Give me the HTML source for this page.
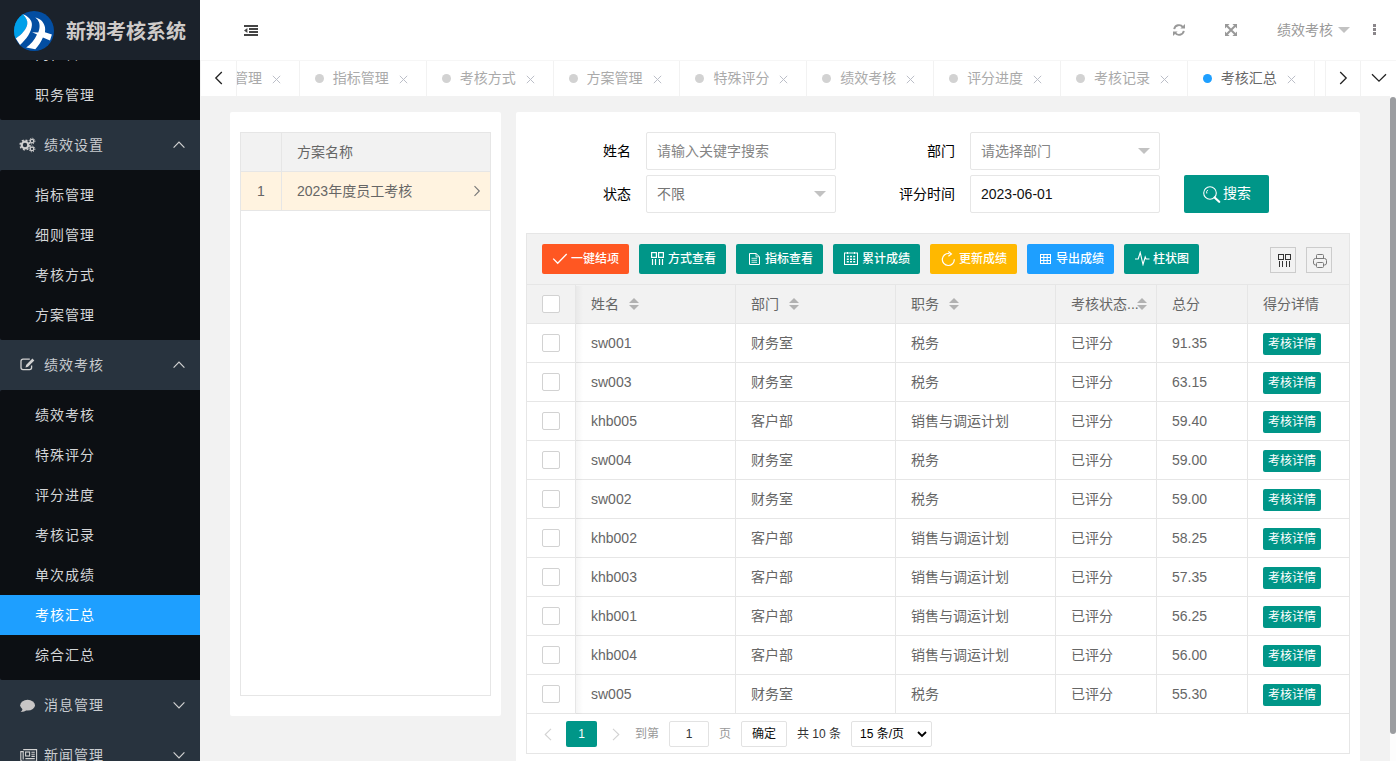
<!DOCTYPE html>
<html lang="zh-CN">
<head>
<meta charset="utf-8">
<title>新翔考核系统</title>
<style>
*{box-sizing:border-box;margin:0;padding:0}
html,body{width:1396px;height:761px;overflow:hidden}
body{font-family:"Liberation Sans","Noto Sans CJK SC",sans-serif;font-size:14px;color:#666;background:#f2f2f2;position:relative;line-height:1}
ul{list-style:none}
svg{display:block}
/* sidebar */
#side{position:absolute;left:0;top:0;width:200px;height:761px;background:#28333e;overflow:hidden}
#logo{position:absolute;left:0;top:0;width:200px;height:60px;background:#1b222b;z-index:5}
#logo .ttl{position:absolute;left:66px;top:0;line-height:64px;font-size:20px;font-weight:bold;color:#cfcbc9;white-space:nowrap;letter-spacing:0}
#logo svg{position:absolute;left:14px;top:11px}
#menu{position:absolute;left:0;top:-10px;width:200px}
#menu .par{height:50px;line-height:50px;color:#c9ccd0;position:relative;padding-left:44px;font-size:14px;letter-spacing:1px}
#menu .par .ic{position:absolute;left:19.500px;top:17px}
#menu .par .ar{position:absolute;left:172px;top:20px}
#menu .sub{background:#0c0f13;padding:5px 0;border-radius:2px 0 0 2px}
#menu .sub li{height:40px;line-height:40px;padding-left:35px;color:#d4d6d8;font-size:14px;letter-spacing:1px}
#menu .sub li.on{background:#1e9fff;color:#fff}
/* header */
#hdr{position:absolute;left:200px;top:0;width:1196px;height:60px;background:#fff}
#tabs{position:absolute;left:200px;top:60px;width:1196px;height:36px;background:#fff;border-top:1px solid #f6f6f6;border-left:1px solid #f4f4f4;overflow:hidden}
#tabs .tab{position:absolute;top:0;height:35px;width:126.86px;border-right:1px solid #f2f2f2;line-height:34px;color:#aaa;font-size:14px;white-space:nowrap}
#tabs .tab i{position:absolute;left:15px;top:13px;width:9px;height:9px;border-radius:50%;background:#d2d2d2}
#tabs .tab span{position:absolute;left:33px;top:0}
#tabs .tab b{position:absolute;left:99px;top:14px;font-weight:normal}
#tabs .tab.on{color:#666}
#tabs .tab.on i{background:#1e9fff}
#tabs .ctl{position:absolute;top:0;height:35px;background:#fff;border-left:1px solid #f2f2f2}
/* cards */
.card{position:absolute;background:#fff;border-radius:2px}
table{border-collapse:separate;border-spacing:0}

/* left card */
.tv{position:absolute;border:1px solid #e6e6e6;background:#fff}
.lt td,.lt th{height:39px;border-right:1px solid #e6e6e6;border-bottom:1px solid #e6e6e6;font-weight:normal;text-align:left;padding:0 15px;font-size:14px;color:#666;white-space:nowrap}
.lt th{background:#f2f2f2}
.lt tr.sel td{background:#fff3e0}
/* form */
.lab{position:absolute;width:110px;text-align:right;line-height:38px;height:38px;color:#000;font-size:14px}
.inp{position:absolute;width:190px;height:38px;border:1px solid #e6e6e6;border-radius:2px;background:#fff;line-height:36px;padding-left:10px;font-size:14px;color:#757575;white-space:nowrap}
.edge{position:absolute;right:9px;top:15px;width:0;height:0;border:6px solid transparent;border-top-color:#c2c2c2;border-bottom-width:0}
.btn{position:absolute;background:#009688;color:#fff;border-radius:2px;white-space:nowrap}
.tb .btn{top:10px;height:30px;line-height:31px;font-size:12px;width:87px;font-weight:500}
.tb .btn svg{position:absolute}
.tb .btn span{position:absolute;top:0}
/* data table */
.dt{position:absolute;left:0;top:51px;width:822px;table-layout:fixed}
.dt th,.dt td{height:39px;border-right:1px solid #e6e6e6;border-bottom:1px solid #e6e6e6;font-weight:normal;text-align:left;padding:0 15px;font-size:14px;color:#666;white-space:nowrap;overflow:hidden;position:relative}
.dt th{background:#f2f2f2}
.dt td:last-child,.dt th:last-child{border-right:0}
.cb{display:block;width:18px;height:18px;border:1px solid #d2d2d2;border-radius:2px;background:#fff;margin:0 auto}
.xs{display:inline-block;vertical-align:middle;height:22px;line-height:22px;padding:0 5px;font-size:12px;background:#009688;color:#fff;border-radius:2px;position:relative;top:1px}
.sort{position:absolute;top:13px;width:10px;height:12px}
.sort:before,.sort:after{content:"";position:absolute;left:0;width:0;height:0;border:5px solid transparent}
.sort:before{top:-5px;border-bottom-color:#b2b2b2}
.sort:after{top:7px;border-top-color:#b2b2b2}
.pg{position:absolute;left:0;top:480px;width:822px;height:39px;font-size:12px;color:#333}
.pg>*{position:absolute}
</style>
</head>
<body>
<div id="side">
  <div id="menu">
    <ul class="sub">
      <li>部门管理</li>
      <li style="position:relative;top:-1px">岗位管理</li>
      <li>职务管理</li>
    </ul>
    <div class="par"><span class="ic"><svg style="margin-left:-1px" width="18" height="16" viewBox="0 0 18 16"><g fill="none" stroke="#cfcfcf"><circle cx="6" cy="8" r="3.300" stroke-width="2.200"/><circle cx="6" cy="8" r="4.900" stroke-width="1.500" stroke-dasharray="1.960 1.890"/><circle cx="13" cy="4.100" r="1.800" stroke-width="1.300"/><circle cx="13" cy="4.100" r="2.900" stroke-width="1" stroke-dasharray="1.150 1.130"/><circle cx="13" cy="11.900" r="1.800" stroke-width="1.300"/><circle cx="13" cy="11.900" r="2.900" stroke-width="1" stroke-dasharray="1.150 1.130"/></g></svg></span>绩效设置<span class="ar"><svg width="14" height="10" viewBox="0 0 14 10"><path d="M1.6 7.6L7 2.2l5.4 5.4" fill="none" stroke="#d2d2d2" stroke-width="1.2"/></svg></span></div>
    <ul class="sub">
      <li>指标管理</li>
      <li>细则管理</li>
      <li>考核方式</li>
      <li>方案管理</li>
    </ul>
    <div class="par"><span class="ic"><svg width="18" height="16" viewBox="0 0 18 16"><path d="M9.800 2.200H3a2 2 0 0 0-2 2v6.400a2 2 0 0 0 2 2h6.600a2 2 0 0 0 2-2V8.600" fill="none" stroke="#d2d2d2" stroke-width="1.300"/><path d="M5.500 10.400l.6-2.500 6.300-6.300 1.900 1.900-6.300 6.300z" fill="#d2d2d2"/></svg></span>绩效考核<span class="ar"><svg width="14" height="10" viewBox="0 0 14 10"><path d="M1.6 7.6L7 2.2l5.4 5.4" fill="none" stroke="#d2d2d2" stroke-width="1.2"/></svg></span></div>
    <ul class="sub">
      <li>绩效考核</li>
      <li>特殊评分</li>
      <li>评分进度</li>
      <li>考核记录</li>
      <li>单次成绩</li>
      <li class="on">考核汇总</li>
      <li>综合汇总</li>
    </ul>
    <div class="par"><span class="ic"><svg width="18" height="16" viewBox="0 0 18 16"><ellipse cx="7.600" cy="8.200" rx="7.400" ry="5.400" fill="#c8c6c6"/><path d="M2.600 11 C2.600 13 1.800 14.200 .6 15 C3.200 15 5.400 14.200 6.600 13z" fill="#c8c6c6"/></svg></span>消息管理<span class="ar"><svg width="14" height="10" viewBox="0 0 14 10"><path d="M1.6 2.4L7 7.8l5.4-5.4" fill="none" stroke="#d2d2d2" stroke-width="1.2"/></svg></span></div>
    <div class="par"><span class="ic"><svg width="18" height="16" viewBox="0 0 18 16"><g fill="none" stroke="#d2d2d2" stroke-width="1.1" transform="translate(0 1)"><path d="M3.2 1.6h13.4v11.8H2.6a1.8 1.8 0 0 1-1.8-1.8V3.6h2.4v8"/><rect x="5.6" y="4" width="4" height="4"/><path d="M11.4 4.2h3.4M11.4 6.2h3.4M11.4 8.4h3.4M5.4 10.6h9.4"/></g></svg></span>新闻管理<span class="ar"><svg width="14" height="10" viewBox="0 0 14 10"><path d="M1.6 2.4L7 7.8l5.4-5.4" fill="none" stroke="#d2d2d2" stroke-width="1.2"/></svg></span></div>
  </div>
  <div id="logo">
    <svg width="40" height="40" viewBox="0 0 40 40"><defs><clipPath id="lc"><circle cx="20" cy="20" r="20"/></clipPath></defs>
<g clip-path="url(#lc)"><rect width="40" height="40" fill="#034ea2"/>
<path d="M-2 -2 L9.4 3.6 C12.5 7 13.8 10 13.3 13 C12.6 18 8 23.5 1.5 27.5 L-3 30 Z" fill="#00a0e9"/>
<path d="M9 3.2 C14 5 18.2 9 17.9 14 C17.6 21 12.5 28 6 34 L1.8 27.4 C8 23.5 12.6 18 13.3 13 C13.8 10 12.5 7 9 3.2 Z" fill="#fff"/>
<path d="M21.3 6.6 C26 7.5 29.6 11 30.8 15.5 C31.3 17.5 31.2 19.6 30.9 21.3 L37.9 23.4 L36 29.6 L28.9 26.6 C27 31 24.5 35 21.3 38.2 L12.2 36.4 C16.5 33.5 20.5 29 23 23.4 L18.2 21.3 L24.2 21.4 C26 18 26 13 24.6 10.5 C23.8 9 22.8 7.8 21.3 6.6 Z" fill="#fff"/>
</g></svg>
    <div class="ttl">新翔考核系统</div>
  </div>
</div>
<div id="hdr">
  <svg style="position:absolute;left:44px;top:25px" width="14" height="11" viewBox="0 0 14 11"><path d="M0 0h14v2H0zM5 3h9v2H5zM5 6h9v2H5zM0 9h14v2H0zM3.4 2.9v5.2L0 5.5z" fill="#444"/></svg>
  <svg style="position:absolute;left:973px;top:24px" width="12" height="12" viewBox="0 0 12 12"><g fill="none" stroke="#999" stroke-width="1.9"><path d="M1.2 5.2A4.9 4.9 0 0 1 10 3.2"/><path d="M10.8 6.8A4.9 4.9 0 0 1 2 8.8"/></g><path d="M12 0v4.6H7.4zM0 12V7.4h4.6z" fill="#999"/></svg>
  <svg style="position:absolute;left:1025px;top:24px" width="12" height="12" viewBox="0 0 12 12"><path d="M2 2l8 8M10 2l-8 8" stroke="#999" stroke-width="2" fill="none"/><path d="M0 0h4.6L0 4.6zM12 0v4.6L7.4 0zM0 12V7.4L4.600 12zM12 12H7.4L12 7.4z" fill="#999"/></svg>
  <div style="position:absolute;left:1077px;top:0;line-height:60px;font-size:14px;color:#999">绩效考核</div>
  <div style="position:absolute;left:1138px;top:27px;width:0;height:0;border:6px solid transparent;border-top-color:#c2c2c2;border-bottom-width:0"></div>
  <div style="position:absolute;left:1173px;top:24px;width:3px;height:3px;background:#8a868a;box-shadow:0 4px 0 #8a868a,0 8px 0 #8a868a"></div>
</div>
<div id="tabs">
  <div class="tab" style="left:-28.00px"><i></i><span>部门管理</span><b><svg width="9" height="9" viewBox="0 0 9 9"><path d="M.8.8l7.400 7.400M8.200.8L.8 8.200" stroke="#bcbfc8" stroke-width="1" fill="none"/></svg></b></div>
  <div class="tab" style="left:98.86px"><i></i><span>指标管理</span><b><svg width="9" height="9" viewBox="0 0 9 9"><path d="M.8.8l7.400 7.400M8.200.8L.8 8.200" stroke="#bcbfc8" stroke-width="1" fill="none"/></svg></b></div>
  <div class="tab" style="left:225.71px"><i></i><span>考核方式</span><b><svg width="9" height="9" viewBox="0 0 9 9"><path d="M.8.8l7.400 7.400M8.200.8L.8 8.200" stroke="#bcbfc8" stroke-width="1" fill="none"/></svg></b></div>
  <div class="tab" style="left:352.57px"><i></i><span>方案管理</span><b><svg width="9" height="9" viewBox="0 0 9 9"><path d="M.8.8l7.400 7.400M8.200.8L.8 8.200" stroke="#bcbfc8" stroke-width="1" fill="none"/></svg></b></div>
  <div class="tab" style="left:479.43px"><i></i><span>特殊评分</span><b><svg width="9" height="9" viewBox="0 0 9 9"><path d="M.8.8l7.400 7.400M8.200.8L.8 8.200" stroke="#bcbfc8" stroke-width="1" fill="none"/></svg></b></div>
  <div class="tab" style="left:606.28px"><i></i><span>绩效考核</span><b><svg width="9" height="9" viewBox="0 0 9 9"><path d="M.8.8l7.400 7.400M8.200.8L.8 8.200" stroke="#bcbfc8" stroke-width="1" fill="none"/></svg></b></div>
  <div class="tab" style="left:733.14px"><i></i><span>评分进度</span><b><svg width="9" height="9" viewBox="0 0 9 9"><path d="M.8.8l7.400 7.400M8.200.8L.8 8.200" stroke="#bcbfc8" stroke-width="1" fill="none"/></svg></b></div>
  <div class="tab" style="left:860.00px"><i></i><span>考核记录</span><b><svg width="9" height="9" viewBox="0 0 9 9"><path d="M.8.8l7.400 7.400M8.200.8L.8 8.200" stroke="#bcbfc8" stroke-width="1" fill="none"/></svg></b></div>
  <div class="tab on" style="left:986.86px"><i></i><span>考核汇总</span><b><svg width="9" height="9" viewBox="0 0 9 9"><path d="M.8.8l7.400 7.400M8.200.8L.8 8.200" stroke="#bcbfc8" stroke-width="1" fill="none"/></svg></b></div>
  <div class="ctl" style="left:-1px;width:37px;border-left:0;border-right:1px solid #f2f2f2"><svg style="position:absolute;left:14px;top:10px" width="10" height="14" viewBox="0 0 10 14"><path d="M7.800 1L1.800 7l6 6" fill="none" stroke="#222" stroke-width="1.3"/></svg></div>
  <div class="ctl" style="left:1124px;width:36px"><svg style="position:absolute;left:12px;top:10px" width="10" height="14" viewBox="0 0 10 14"><path d="M2.200 1l6 6-6 6" fill="none" stroke="#222" stroke-width="1.3"/></svg></div>
  <div class="ctl" style="left:1159px;width:36px"><svg style="position:absolute;left:10px;top:12px" width="16" height="10" viewBox="0 0 16 10"><path d="M1 1.200l7 7 7-7" fill="none" stroke="#222" stroke-width="1.3"/></svg></div>
</div>
<div class="card" id="left" style="left:230px;top:112px;width:271px;height:604px">
  <div class="tv" style="left:10px;top:20px;width:251px;height:564px">
    <table class="lt" style="width:249px;table-layout:fixed"><colgroup><col style="width:41px"><col></colgroup>
      <tr><th></th><th style="border-right:0">方案名称</th></tr>
      <tr class="sel"><td style="padding:0;text-align:center">1</td><td style="border-right:0;position:relative">2023年度员工考核<svg style="position:absolute;left:191px;top:13px" width="8" height="12" viewBox="0 0 8 12"><path d="M1.500 1.200l4.800 4.800-4.800 4.800" fill="none" stroke="#777" stroke-width="1.100"/></svg></td></tr>
    </table>
  </div>
</div>
<div class="card" id="right" style="left:516px;top:112px;width:844px;height:660px">
  <div class="lab" style="left:5px;top:20px">姓名</div><div class="inp" style="left:130px;top:20px;color:#858585">请输入关键字搜索</div>
  <div class="lab" style="left:329px;top:20px">部门</div><div class="inp" style="left:454px;top:20px;color:#858585">请选择部门<i class="edge"></i></div>
  <div class="lab" style="left:5px;top:63px">状态</div><div class="inp" style="left:130px;top:63px">不限<i class="edge"></i></div>
  <div class="lab" style="left:329px;top:63px">评分时间</div><div class="inp" style="left:454px;top:63px;color:#111">2023-06-01</div>
  <div class="btn" style="left:668px;top:63px;width:85px;height:38px;line-height:37px;font-size:14px"><svg style="position:absolute;left:19px;top:11px" width="18" height="17" viewBox="0 0 18 17"><g fill="none" stroke="#fff"><circle cx="7" cy="7" r="6.300" stroke-width="1.100"/><path d="M3.800 7.500a3.300 3.300 0 0 1 1-3.600" stroke-width="1"/><path d="M11.600 11.500l4.600 4.300" stroke-width="2.200" stroke-linecap="round"/></g></svg><span style="position:absolute;left:39px">搜索</span></div>
  <div class="tv" style="left:10px;top:121px;width:824px;height:521px;background:#fff">
    <div class="tb" style="position:absolute;left:0;top:0;width:822px;height:51px;background:#f2f2f2;border-bottom:1px solid #e6e6e6">
      <div class="btn" style="left:15px;background:#ff5722;width:87px"><svg style="left:10px;top:9px" width="16" height="12" viewBox="0 0 16 12"><path d="M1.200 5.600l4.500 4.700 9-9.300" fill="none" stroke="#fff" stroke-width="1.300"/></svg><span style="left:29px">一键结项</span></div>
      <div class="btn" style="left:112px;background:#009688;width:87px"><svg style="left:12px;top:8px" width="13" height="13" viewBox="0 0 13 13"><g fill="none" stroke="#fff" stroke-width="1.200"><rect x=".6" y=".6" width="4.800" height="4.800"/><rect x="7.600" y=".6" width="4.800" height="4.800"/><path d="M1.500 7v6M4.500 7v6M8.500 7v6M11.500 7v6"/></g></svg><span style="left:29px">方式查看</span></div>
      <div class="btn" style="left:209px;background:#009688;width:87px"><svg style="left:13px;top:9px" width="12" height="12" viewBox="0 0 12 12"><g fill="none" stroke="#fff" stroke-width="1"><path d="M.5.500h6.500l3.500 3.300v7.700H.5z"/><path d="M7 .5v3.300h3.500M2.500 5.300h5.500M2.500 7.300h5.500M2.500 9.300h5.500" stroke-width=".8"/></g></svg><span style="left:29px">指标查看</span></div>
      <div class="btn" style="left:306px;background:#009688;width:87px"><svg style="left:11px;top:8px" width="14" height="13" viewBox="0 0 14 13"><g fill="none" stroke="#fff" stroke-width="1"><rect x=".5" y="1" width="13" height="11.500"/><path d="M3.500 0v2M10.500 0v2" /><path d="M2.800 4.600h2M6 4.600h2M9.200 4.600h2M2.800 7.200h2M6 7.200h2M9.200 7.200h2M2.800 9.800h2M6 9.800h2M9.200 9.800h2" stroke-width="1.500"/></g></svg><span style="left:29px">累计成绩</span></div>
      <div class="btn" style="left:403px;background:#ffb800;width:87px"><svg style="left:11px;top:7px" width="15" height="16" viewBox="0 0 15 16"><path d="M8.300 2.600A6 6 0 1 0 13.300 8.300" fill="none" stroke="#fff" stroke-width="1.200"/><path d="M7.400 .6l3 2.300-3 2.300" fill="none" stroke="#fff" stroke-width="1.200"/></svg><span style="left:29px">更新成绩</span></div>
      <div class="btn" style="left:500px;background:#1e9fff;width:87px"><svg style="left:13px;top:10px" width="11" height="10" viewBox="0 0 11 10"><g fill="none" stroke="#fff" stroke-width="1"><rect x=".5" y=".5" width="10" height="9"/><path d="M.5 3.500h10M.5 6.500h10M3.800 .5v9M7.200 .5v9"/></g></svg><span style="left:29px">导出成绩</span></div>
      <div class="btn" style="left:597px;background:#009688;width:75px"><svg style="left:11px;top:7px" width="15" height="15" viewBox="0 0 15 15"><path d="M0 8h3.200l2-6.500 2.800 12 2.200-7.500.8 2h3.500" fill="none" stroke="#fff" stroke-width="1.100"/></svg><span style="left:29px">柱状图</span></div>
      <div style="position:absolute;left:743px;top:13px;width:26px;height:26px;border:1px solid #ccc"><svg style="position:absolute;left:7px;top:6px" width="13" height="13" viewBox="0 0 13 13"><g fill="none" stroke="#333" stroke-width="1"><rect x=".5" y=".5" width="5" height="5"/><rect x="7.500" y=".5" width="5" height="5"/><path d="M1.500 7v6M4.500 7v6M8.500 7v6M11.500 7v6"/></g></svg></div>
      <div style="position:absolute;left:779px;top:13px;width:26px;height:26px;border:1px solid #ccc"><svg style="position:absolute;left:6px;top:6px" width="14" height="14" viewBox="0 0 14 14"><g fill="none" stroke="#7a7a7a" stroke-width="1"><path d="M3.500 4.500V1.500a1 1 0 0 1 1-1h5a1 1 0 0 1 1 1v3"/><rect x=".5" y="4.500" width="13" height="6.500" rx="2"/><rect x="3.500" y="8.500" width="7" height="5" rx="1" fill="#f2f2f2"/></g></svg></div>
    </div>
    <table class="dt"><colgroup><col style="width:49px"><col style="width:160px"><col style="width:160px"><col style="width:160px"><col style="width:101px"><col style="width:91px"><col style="width:101px"></colgroup>
      <tr><th style="padding:0"><i class="cb"></i></th><th>姓名<i class="sort" style="left:53px"></i></th><th>部门<i class="sort" style="left:53px"></i></th><th>职务<i class="sort" style="left:53px"></i></th><th>考核状态...<i class="sort" style="left:81px"></i></th><th>总分</th><th>得分详情</th></tr>
      <tr><td style="padding:0"><i class="cb"></i></td><td>sw001</td><td>财务室</td><td>税务</td><td>已评分</td><td>91.35</td><td><span class="xs">考核详情</span></td></tr>
      <tr><td style="padding:0"><i class="cb"></i></td><td>sw003</td><td>财务室</td><td>税务</td><td>已评分</td><td>63.15</td><td><span class="xs">考核详情</span></td></tr>
      <tr><td style="padding:0"><i class="cb"></i></td><td>khb005</td><td>客户部</td><td>销售与调运计划</td><td>已评分</td><td>59.40</td><td><span class="xs">考核详情</span></td></tr>
      <tr><td style="padding:0"><i class="cb"></i></td><td>sw004</td><td>财务室</td><td>税务</td><td>已评分</td><td>59.00</td><td><span class="xs">考核详情</span></td></tr>
      <tr><td style="padding:0"><i class="cb"></i></td><td>sw002</td><td>财务室</td><td>税务</td><td>已评分</td><td>59.00</td><td><span class="xs">考核详情</span></td></tr>
      <tr><td style="padding:0"><i class="cb"></i></td><td>khb002</td><td>客户部</td><td>销售与调运计划</td><td>已评分</td><td>58.25</td><td><span class="xs">考核详情</span></td></tr>
      <tr><td style="padding:0"><i class="cb"></i></td><td>khb003</td><td>客户部</td><td>销售与调运计划</td><td>已评分</td><td>57.35</td><td><span class="xs">考核详情</span></td></tr>
      <tr><td style="padding:0"><i class="cb"></i></td><td>khb001</td><td>客户部</td><td>销售与调运计划</td><td>已评分</td><td>56.25</td><td><span class="xs">考核详情</span></td></tr>
      <tr><td style="padding:0"><i class="cb"></i></td><td>khb004</td><td>客户部</td><td>销售与调运计划</td><td>已评分</td><td>56.00</td><td><span class="xs">考核详情</span></td></tr>
      <tr><td style="padding:0"><i class="cb"></i></td><td>sw005</td><td>财务室</td><td>税务</td><td>已评分</td><td>55.30</td><td><span class="xs">考核详情</span></td></tr>
    </table>
    <div style="position:absolute;left:49px;top:52px;width:7px;height:428px;background:linear-gradient(90deg,rgba(0,0,0,.04),rgba(0,0,0,0))"></div>
    <div class="pg">
      <svg style="left:17px;top:14px" width="8" height="13" viewBox="0 0 8 13"><path d="M7 .8L1.200 6.500 7 12.200" fill="none" stroke="#d2d2d2" stroke-width="1.100"/></svg>
      <div style="left:39px;top:7px;width:31px;height:26px;line-height:26px;text-align:center;background:#009688;color:#fff;border-radius:2px">1</div>
      <svg style="left:85px;top:14px" width="8" height="13" viewBox="0 0 8 13"><path d="M1 .8l5.800 5.700L1 12.200" fill="none" stroke="#d2d2d2" stroke-width="1.100"/></svg>
      <div style="left:108px;top:7px;line-height:26px;color:#999">到第</div>
      <div style="left:142px;top:7px;width:40px;height:26px;line-height:24px;border:1px solid #e2e2e2;border-radius:2px;text-align:center;color:#333;background:#fff">1</div>
      <div style="left:192px;top:7px;line-height:26px;color:#999">页</div>
      <div style="left:214px;top:7px;width:46px;height:26px;line-height:24px;border:1px solid #e2e2e2;border-radius:2px;text-align:center;color:#111;background:#fff">确定</div>
      <div style="left:270px;top:7px;line-height:26px;color:#333">共 10 条</div>
      <div style="left:324px;top:7px;width:81px;height:26px;line-height:24px;border:1px solid #e2e2e2;border-radius:2px;padding-left:8px;color:#000;background:#fff">15 条/页<svg style="position:absolute;left:65px;top:9px" width="10" height="7" viewBox="0 0 10 7"><path d="M1 1l4 4 4-4" fill="none" stroke="#000" stroke-width="1.800"/></svg></div>
    </div>
  </div>
</div>
<div style="position:absolute;left:1390px;top:96px;width:6px;height:665px;background:#fdfdfd"></div>
<div style="position:absolute;left:1390px;top:97px;width:6px;height:637px;background:#9b9da0;border-radius:3px"></div>
</body>
</html>
